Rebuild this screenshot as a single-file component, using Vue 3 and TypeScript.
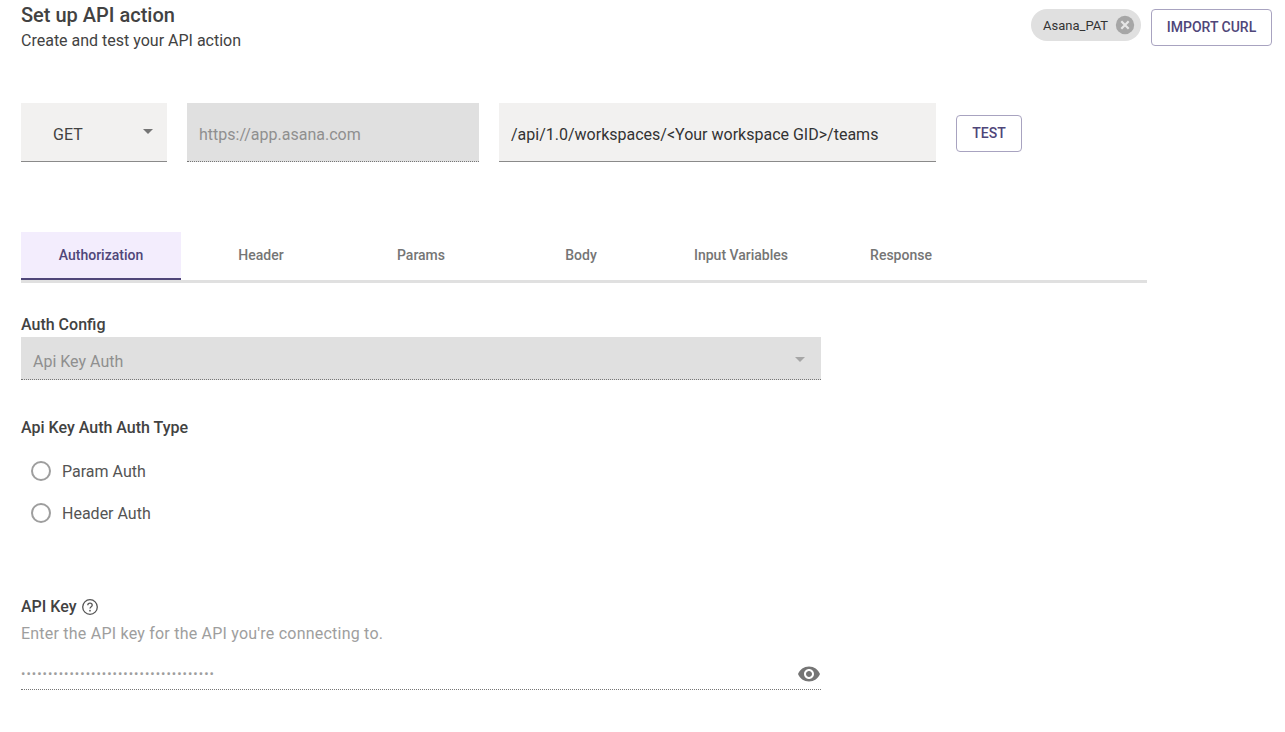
<script setup lang="ts">
const tabs = ['Authorization', 'Header', 'Params', 'Body', 'Input Variables', 'Response']
const authTypes = ['Param Auth', 'Header Auth']
const maskedKey = '•'.repeat(36)
</script>

<template>
  <div class="page">
    <header class="top">
      <div>
        <h1 class="title">Set up API action</h1>
        <p class="subtitle">Create and test your API action</p>
      </div>
      <div class="top-actions">
        <span class="chip">
          Asana_PAT
          <svg class="chip__x" width="20" height="20" viewBox="0 0 20 20" aria-hidden="true">
            <circle cx="10" cy="10" r="9.2" fill="#a6a6a6" />
            <path d="M6.3 6.3l7.4 7.4M13.7 6.3l-7.4 7.4" stroke="#e6e6e6" stroke-width="2.2" />
          </svg>
        </span>
        <button class="btn btn--import">IMPORT CURL</button>
      </div>
    </header>

    <div class="request">
      <div class="field field--method">
        <span>GET</span>
        <span class="caret caret--dark"></span>
      </div>
      <div class="field field--host">https://app.asana.com</div>
      <div class="field field--path">/api/1.0/workspaces/&lt;Your workspace GID&gt;/teams</div>
      <button class="btn btn--test">TEST</button>
    </div>

    <nav class="tabs">
      <div
        v-for="(tab, i) in tabs"
        :key="tab"
        :class="['tab', { 'tab--active': i === 0 }]"
      >
        {{ tab }}
      </div>
    </nav>

    <section class="auth-config">
      <div class="label">Auth Config</div>
      <div class="select-disabled">
        <span>Api Key Auth</span>
        <span class="caret caret--light"></span>
      </div>
    </section>

    <section class="auth-type">
      <div class="label">Api Key Auth Auth Type</div>
      <div class="radios">
        <div v-for="item in authTypes" :key="item" class="radio">
          <span class="radio__ring"></span>
          <span>{{ item }}</span>
        </div>
      </div>
    </section>

    <section class="api-key">
      <div class="label label--help">
        API Key
        <svg width="18" height="18" viewBox="0 0 18 18" fill="none" aria-hidden="true">
          <circle cx="9" cy="9" r="7.3" stroke="#555" stroke-width="1.3" />
          <path d="M6.8 7.2C6.8 6 7.8 5.2 9 5.2s2.2.8 2.2 2c0 1.5-2.2 1.6-2.2 3.4" stroke="#555" stroke-width="1.3" />
          <circle cx="9" cy="12.7" r="0.85" fill="#555" />
        </svg>
      </div>
      <p class="hint">Enter the API key for the API you're connecting to.</p>
      <div class="key-input">
        <span class="key-input__dots">{{ maskedKey }}</span>
        <svg width="24" height="24" viewBox="0 0 24 24" aria-hidden="true">
          <path
            fill="#757575"
            d="M12 4.5C7 4.5 2.73 7.61 1 12c1.73 4.39 6 7.5 11 7.5s9.27-3.11 11-7.5c-1.73-4.39-6-7.5-11-7.5zM12 17c-2.76 0-5-2.24-5-5s2.24-5 5-5 5 2.24 5 5-2.24 5-5 5zm0-8c-1.66 0-3 1.34-3 3s1.34 3 3 3 3-1.34 3-3-1.34-3-3-3z"
          />
        </svg>
      </div>
    </section>
  </div>
</template>

<style>
html,
body {
  background: #fff;
}
</style>

<style scoped>
.page {
  box-sizing: border-box;
  width: 1285px;
  height: 732px;
  overflow: hidden;
  padding: 0 13px 0 21px;
  font-family: Roboto, "Liberation Sans", sans-serif;
  color: #424242;
}

.top {
  display: flex;
  justify-content: space-between;
  align-items: flex-start;
  height: 57px;
  padding-top: 4px;
  box-sizing: border-box;
}

.title {
  margin: 0;
  font-size: 20px;
  line-height: 23px;
  font-weight: 500;
}

.subtitle {
  margin: 2px 0 0;
  font-size: 16px;
  line-height: 24px;
  color: #424242;
}

.top-actions {
  display: flex;
  align-items: flex-start;
  gap: 10px;
  padding-top: 5px;
}

.chip {
  display: flex;
  align-items: center;
  justify-content: space-between;
  box-sizing: border-box;
  width: 110px;
  height: 32px;
  padding: 0 6px 0 12px;
  border-radius: 16px;
  background: #e0e0e0;
  font-size: 13px;
  color: #333;
}

.btn {
  box-sizing: border-box;
  border: 1px solid #a8a3c0;
  border-radius: 4px;
  background: #fff;
  color: #4f4679;
  font-family: inherit;
  font-size: 14px;
  font-weight: 500;
  padding: 0 0 1px;
}

.btn--import {
  width: 121px;
  height: 37px;
}

.btn--test {
  width: 66px;
  height: 37px;
  margin-left: 20px;
  margin-top: 12px;
}

.request {
  display: flex;
  align-items: flex-start;
  margin-top: 46px;
}

.field {
  box-sizing: border-box;
  display: flex;
  align-items: center;
  height: 59px;
  padding-top: 4px;
  font-size: 16px;
}

.field--method {
  width: 146px;
  padding-left: 32px;
  padding-right: 14px;
  justify-content: space-between;
  background: #f2f1f0;
  border-bottom: 1px solid #8a8a8a;
}

.field--host {
  width: 292px;
  margin-left: 20px;
  padding-left: 12px;
  background: #e0e0e0;
  border-bottom: 1px dotted #757575;
  color: #8f8f8f;
}

.field--path {
  width: 437px;
  margin-left: 20px;
  padding-left: 12px;
  background: #f2f1f0;
  border-bottom: 1px solid #8a8a8a;
  color: #333;
}

.caret {
  width: 0;
  height: 0;
  border-left: 5px solid transparent;
  border-right: 5px solid transparent;
  margin-bottom: 4px;
}

.caret--dark {
  border-top: 5px solid #757575;
  margin-bottom: 6px;
}

.caret--light {
  border-top: 5px solid #a6a6a6;
}

.tabs {
  display: flex;
  width: 1126px;
  margin-top: 70px;
  border-bottom: 3px solid #e0e0e0;
}

.tab {
  box-sizing: border-box;
  width: 160px;
  height: 48px;
  display: flex;
  align-items: center;
  justify-content: center;
  border-bottom: 2px solid transparent;
  font-size: 14px;
  font-weight: 500;
  color: #757575;
}

.tab--active {
  background: #f3edfd;
  color: #4f4679;
  border-bottom-color: #4f4679;
}

.label {
  font-size: 16px;
  line-height: 19px;
  font-weight: 500;
  color: #424242;
}

.auth-config {
  margin-top: 32px;
}

.select-disabled {
  box-sizing: border-box;
  display: flex;
  justify-content: space-between;
  align-items: center;
  width: 800px;
  height: 43px;
  margin-top: 3px;
  padding: 6px 16px 0 12px;
  background: #e0e0e0;
  border-bottom: 1px dotted #757575;
  font-size: 16px;
  color: #8f8f8f;
}

.auth-type {
  margin-top: 38px;
}

.radios {
  display: flex;
  flex-direction: column;
  gap: 18px;
  margin-top: 22px;
  padding-left: 10px;
}

.radio {
  display: flex;
  align-items: center;
  gap: 11px;
  height: 24px;
  font-size: 16px;
  color: #545454;
}

.radio__ring {
  box-sizing: border-box;
  width: 20px;
  height: 20px;
  border: 2px solid #9e9e9e;
  border-radius: 50%;
}

.api-key {
  margin-top: 72px;
}

.label--help {
  display: flex;
  align-items: center;
  gap: 4px;
}

.hint {
  margin: 8px 0 0;
  font-size: 16px;
  line-height: 19px;
  letter-spacing: 0.22px;
  color: #9e9e9e;
}

.key-input {
  box-sizing: border-box;
  display: flex;
  justify-content: space-between;
  align-items: center;
  width: 800px;
  height: 38px;
  margin-top: 9px;
  padding-top: 6px;
  border-bottom: 1px dotted #757575;
}

.key-input__dots {
  font-size: 13px;
  line-height: 13px;
  letter-spacing: 1px;
  color: #9e9e9e;
}
</style>
